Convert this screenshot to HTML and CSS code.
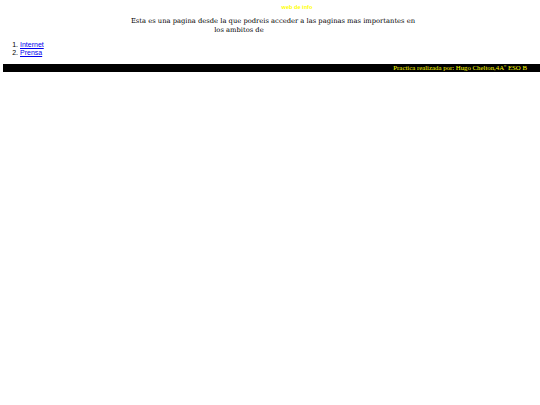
FILE: index.html
```html
<!DOCTYPE html>
<html lang="es">
<head>
<meta charset="utf-8">
<title>web de info</title>
<link rel="stylesheet" href="styles.css">
</head>
<body>
<div class="title">web de info</div>
<p class="intro">Esta es una pagina desde la que podreis acceder a las paginas mas importantes en los ambitos de <span class="blank"></span></p>
<ol class="links">
<li><a href="#">Internet</a></li>
<li><a href="#">Prensa</a></li>
</ol>
<div class="footer">Practica realizada por: Hugo Chelton,4Aº ESO B</div>
</body>
</html>
```
FILE: styles.css
```css
html, body {
  margin: 0;
  padding: 0;
  background: #ffffff;
}
body {
  font-family: "Liberation Serif", serif;
  color: #000000;
}
.title {
  padding-top: 3px;
  padding-left: 54px;
  text-align: center;
  font-family: "Liberation Sans", sans-serif;
  font-size: 5.6px;
  font-weight: bold;
  line-height: 8px;
  color: #ffff00;
}
.intro {
  width: 286px;
  margin: 6px 0 0 130px;
  text-align: center;
  font-family: "DejaVu Serif", serif;
  font-size: 6.75px;
  line-height: 9px;
}
.blank {
  display: inline-block;
  width: 66px;
  height: 1px;
}
.links {
  margin: 6px 0 0 0;
  padding-left: 20px;
  font-family: "Liberation Sans", sans-serif;
  font-size: 7px;
  line-height: 8px;
}
.links a {
  color: #0000ee;
}
.footer {
  margin: 7px 0 0 3px;
  background: #000000;
  color: #ffff00;
  font-size: 6.8px;
  line-height: 8px;
  text-align: right;
  padding-right: 13px;
}
```
